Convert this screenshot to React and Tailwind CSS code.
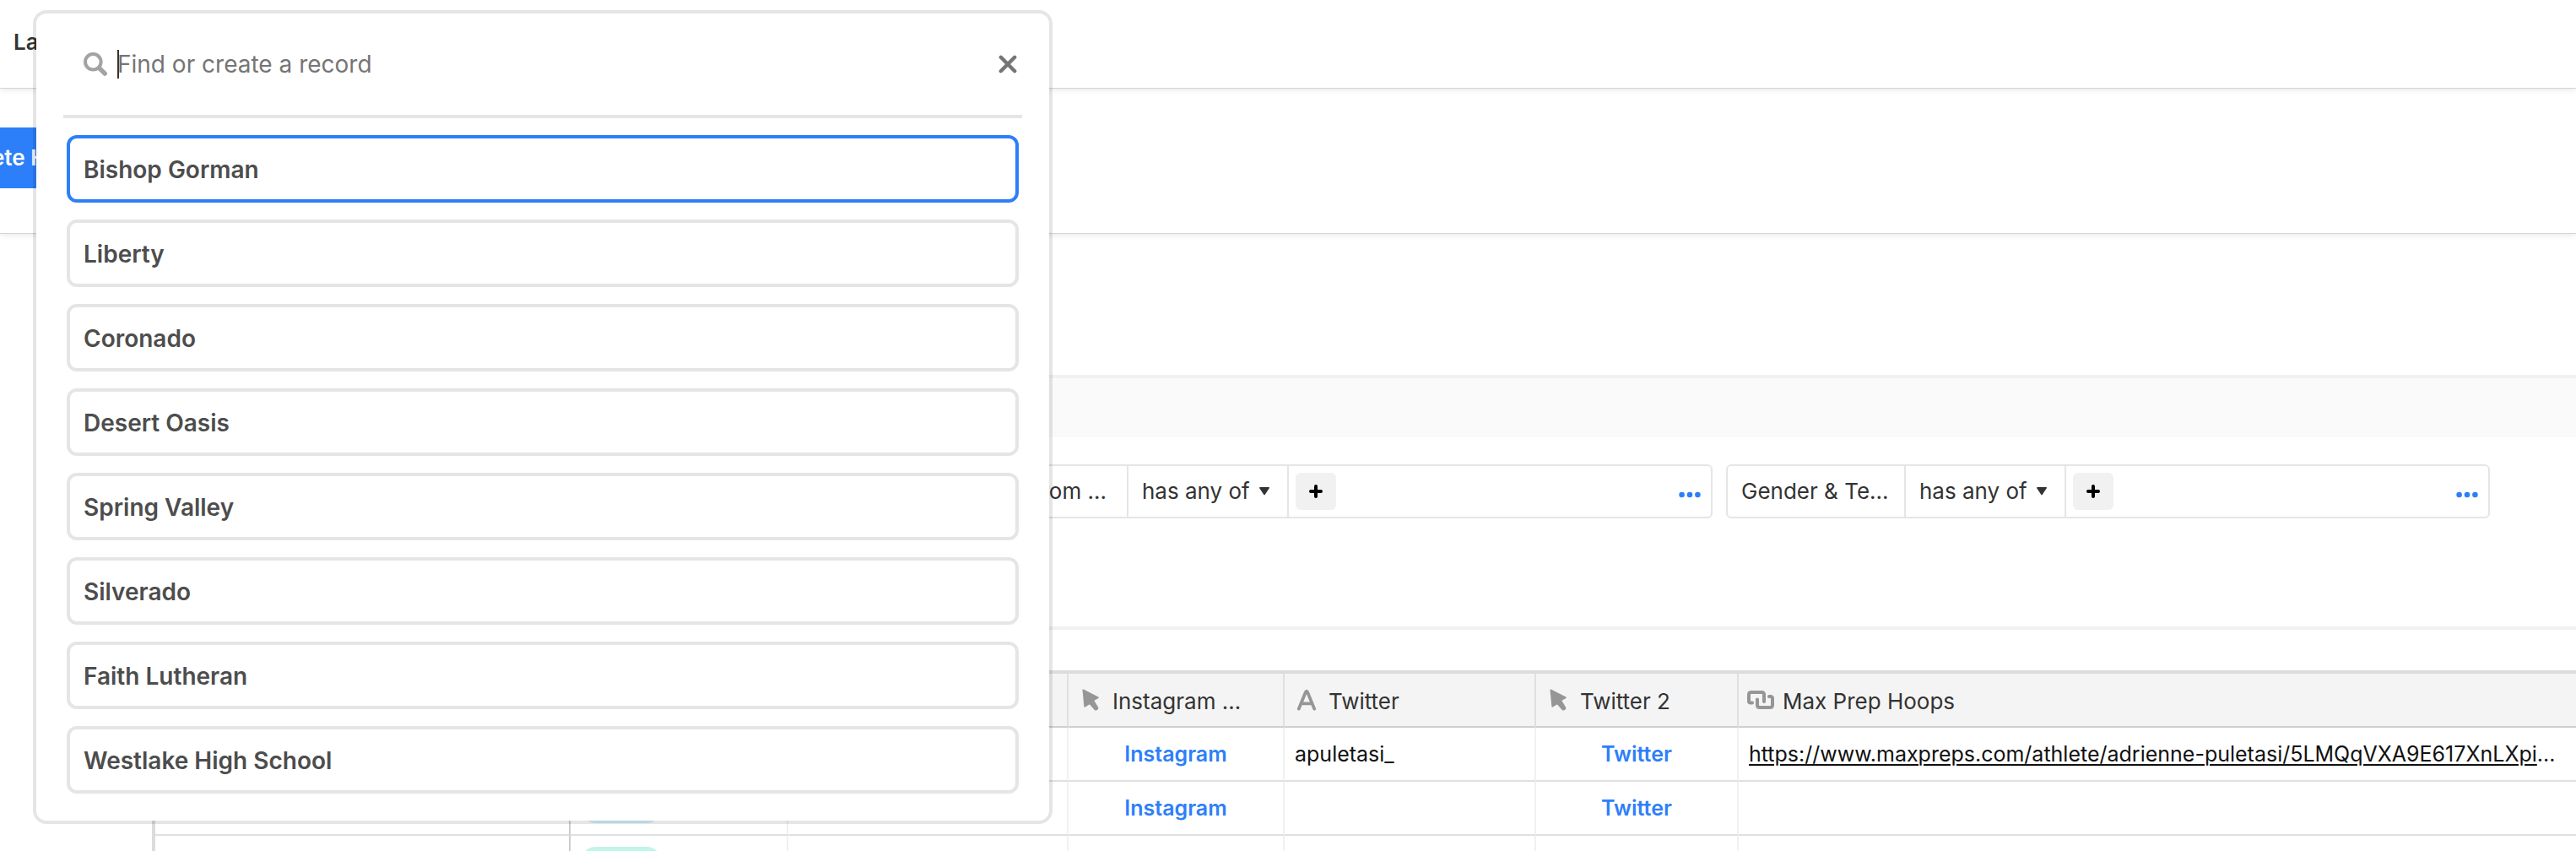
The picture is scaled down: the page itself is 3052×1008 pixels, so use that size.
import React, { useState } from 'react';

const schools = [
  'Bishop Gorman',
  'Liberty',
  'Coronado',
  'Desert Oasis',
  'Spring Valley',
  'Silverado',
  'Faith Lutheran',
  'Westlake High School',
];

const filters = [
  { field: 'from ...', align: 'justify-end' },
  { field: 'Gender & Te...', align: 'justify-start' },
];

const athletes = [
  {
    tag: 'bg-[#d0f0fd]',
    handle: 'apuletasi_',
    link: 'https://www.maxpreps.com/athlete/adrienne-puletasi/5LMQqVXA9E617XnLXpi',
  },
  { tag: 'bg-[#d0f0fd]' },
  { tag: 'bg-[#c2f5e9]' },
];

const SearchIcon = () => (
  <svg className="h-7 w-7 text-[#a3a3a3]" viewBox="0 0 28 28" fill="none" stroke="currentColor">
    <circle cx="11.3" cy="11.3" r="9.3" strokeWidth="4" />
    <path d="M18.5 18.5L25.2 25.2" strokeWidth="5.4" strokeLinecap="round" />
  </svg>
);

const CloseIcon = () => (
  <svg className="h-[22px] w-[22px]" viewBox="0 0 22 22" fill="none" stroke="currentColor" strokeWidth="4.4" strokeLinecap="round">
    <path d="M2.8 2.8L19.2 19.2M19.2 2.8L2.8 19.2" />
  </svg>
);

const PlusIcon = () => (
  <svg className="h-4 w-4" viewBox="0 0 16 16" fill="none" stroke="currentColor" strokeWidth="4" strokeLinecap="round">
    <path d="M8 2V14M2 8H14" />
  </svg>
);

const DotsIcon = () => (
  <svg className="h-2 w-[26px]" viewBox="0 0 26 8" fill="currentColor">
    <circle cx="3.6" cy="4" r="3.3" />
    <circle cx="13" cy="4" r="3.3" />
    <circle cx="22.4" cy="4" r="3.3" />
  </svg>
);

const CursorIcon = () => (
  <svg className="h-[26px] w-8" viewBox="0 0 32 26" fill="currentColor" stroke="currentColor" strokeWidth="1.6" strokeLinejoin="round">
    <path d="M7.3 1.3L25 10.3L19.3 13.6L24.6 22.4Q24.2 24.8 21.6 24.6L15 17.2L9.2 20.8Z" />
  </svg>
);

const TextIcon = () => (
  <svg className="h-[26px] w-8" viewBox="0 0 32 26" fill="none" stroke="currentColor" strokeWidth="3.8" strokeLinecap="round" strokeLinejoin="round">
    <path d="M6.8 23.6L14.8 4Q16 1.2 17.2 4L25.2 23.6M9.8 17.4H22.2" />
  </svg>
);

const LinkIcon = () => (
  <svg className="h-[26px] w-8" viewBox="0 0 32 26" fill="none" stroke="currentColor" strokeWidth="4" strokeLinecap="round" strokeLinejoin="round">
    <path d="M6 16.6H4.4Q2 16.6 2 14.2V6.8Q2 4 4.8 4H17.2Q20 4 20 6.8V15" />
    <path d="M26 9H27.6Q30 9 30 11.6V19.2Q30 22 27.2 22H14.8Q12 22 12 19.2V12.6" />
  </svg>
);

const columns = [
  { name: '', width: 'w-[492px]' },
  { name: '', width: 'w-[258px]' },
  { name: '', width: 'w-[332px]' },
  { name: 'Instagram ...', width: 'w-[256px]', icon: CursorIcon },
  { name: 'Twitter', width: 'w-[298px]', icon: TextIcon },
  { name: 'Twitter 2', width: 'w-[240px]', icon: CursorIcon },
  { name: 'Max Prep Hoops', width: 'w-auto', icon: LinkIcon },
];

const FilterBox = ({ field, align }) => (
  <div className="flex h-16 w-[905px] items-stretch rounded-md border-2 border-[#e5e5e5]">
    <button className={`flex w-[211px] items-center overflow-hidden border-r-2 border-[#e5e5e5] pl-4 pr-6 whitespace-nowrap ${align}`}>
      {field}
    </button>
    <div className="relative w-[190px] border-r-2 border-[#e5e5e5]">
      <select aria-label={`Condition for ${field}`} className="h-full w-full appearance-none bg-transparent pl-4 outline-none">
        <option>has any of</option>
      </select>
      <svg className="pointer-events-none absolute right-5 top-6 h-3 w-3.5" viewBox="0 0 14 12" fill="currentColor" stroke="currentColor" strokeWidth="1.5" strokeLinejoin="round">
        <path d="M1.8 1.8H12.2L7 9.6Z" />
      </svg>
    </div>
    <div className="flex flex-1 items-center justify-between pl-2 pr-3">
      <button aria-label="Add value" className="flex h-11 w-12 items-center justify-center rounded-md bg-[#f1f1f1] text-black">
        <PlusIcon />
      </button>
      <button aria-label="More options" className="pt-2 text-[#2d7ff9]">
        <DotsIcon />
      </button>
    </div>
  </div>
);

const AthleteTable = () => (
  <table className="w-full table-fixed border-separate border-spacing-0 border-l-4 border-t-4 border-[#dcdcdc]">
    <thead>
      <tr className="bg-[#f4f4f4]">
        {columns.map((col, index) => {
          const Icon = col.icon;
          return (
            <th
              key={index}
              className={`h-16 border-b-2 border-b-[#cfcfcf] p-0 text-left font-normal ${col.width} ${index < 6 ? 'border-r-2 border-r-[#dde1e3]' : ''}`}
            >
              {Icon && (
                <div className="flex items-center gap-2.5 pl-2.5 text-[#333333]">
                  <span className="text-[#969696]">
                    <Icon />
                  </span>
                  <span className="pt-1 whitespace-nowrap">{col.name}</span>
                </div>
              )}
            </th>
          );
        })}
      </tr>
    </thead>
    <tbody className="text-[25px]">
      {athletes.map((athlete, index) => (
        <tr key={index}>
          <td className="h-16 border-b-2 border-r-2 border-b-[#dde1e3] border-r-[#cccccc] p-0"></td>
          <td className="border-b-2 border-r-2 border-b-[#dde1e3] border-r-[#f1f1f1] p-0 pl-3">
            <div className={`h-9 w-24 rounded-full ${athlete.tag}`}></div>
          </td>
          <td className="border-b-2 border-r-2 border-b-[#dde1e3] border-r-[#f1f1f1] p-0"></td>
          <td className="border-b-2 border-r-2 border-b-[#dde1e3] border-r-[#f1f1f1] p-0 text-center">
            {index < 2 && <a href="#instagram" className="font-semibold text-[#2d7ff9]">Instagram</a>}
          </td>
          <td className="border-b-2 border-r-2 border-b-[#dde1e3] border-r-[#f1f1f1] p-0 pl-3 text-[#111111]">
            {athlete.handle}
          </td>
          <td className="border-b-2 border-r-2 border-b-[#dde1e3] border-r-[#f1f1f1] p-0 text-center">
            {index < 2 && <a href="#twitter" className="font-semibold text-[#2d7ff9]">Twitter</a>}
          </td>
          <td className="overflow-hidden border-b-2 border-b-[#dde1e3] p-0 pl-3 whitespace-nowrap text-[#111111]">
            {athlete.link && (
              <>
                <a href={athlete.link} className="underline decoration-2 underline-offset-3">{athlete.link}</a>...
              </>
            )}
          </td>
        </tr>
      ))}
    </tbody>
  </table>
);

const RecordPicker = () => {
  const [query, setQuery] = useState('');
  const [selected, setSelected] = useState('Bishop Gorman');

  return (
    <div className="absolute left-[43px] top-4 z-30 w-[1200px] rounded-xl bg-white px-8 pb-8 shadow-[0_0_0_4px_rgba(0,0,0,0.1)]">
      <div className="flex h-[124px] items-center border-b-4 border-[#e5e5e5] pl-6 pr-1.5">
        <SearchIcon />
        <div className="relative ml-3 flex-1">
          <span className="absolute left-0 top-0 h-[34px] w-0.5 bg-[#333333]"></span>
          <input
            type="text"
            aria-label="Find or create a record"
            value={query}
            onChange={(e) => setQuery(e.target.value)}
            placeholder="Find or create a record"
            className="block h-[34px] w-full bg-transparent text-[28px] text-[#333333] outline-none placeholder:text-[#757575]"
          />
        </div>
        <button aria-label="Close" className="text-[#757575]">
          <CloseIcon />
        </button>
      </div>
      <div className="flex flex-col gap-5 px-1 pt-5">
        {schools.map((school) => (
          <button
            key={school}
            onClick={() => setSelected(school)}
            className={`h-20 rounded-xl border-4 px-4 pt-0.5 text-left text-[28px] font-semibold text-[#4d4d4d] ${
              school === selected ? 'border-[#2d7ff9]' : 'border-[#e5e5e5]'
            }`}
          >
            {school}
          </button>
        ))}
      </div>
    </div>
  );
};

export default function App() {
  return (
    <div className="relative h-screen overflow-hidden bg-white font-['Inter','Liberation_Sans',sans-serif] text-[26px] leading-8 text-[#333333]">
      <header className="relative z-20 flex h-[105px] items-center border-b border-[#d4d4d4] bg-white pb-1 pl-4 font-semibold shadow-[0_1px_8px_rgba(0,0,0,0.1)]">
        La
      </header>
      <div className="relative z-10 flex h-[172px] items-center border-b border-[#d4d4d4] bg-white pb-2 shadow-[0_1px_8px_rgba(0,0,0,0.1)]">
        <button className="-ml-2.5 h-[72px] w-48 bg-[#2d7ff9] text-left font-semibold text-white">ete H</button>
      </div>

      <div className="ml-[180px] mt-[167px] h-[74px] border-t-4 border-[#f1f1f1] bg-[#fafafa]"></div>
      <div className="ml-[180px] flex h-[228px] gap-4 border-b-4 border-[#f1f1f1] pl-[944px] pt-8">
        {filters.map((filter) => (
          <FilterBox key={filter.field} field={filter.field} align={filter.align} />
        ))}
      </div>

      <div className="mt-12 pl-[180px]">
        <AthleteTable />
      </div>

      <RecordPicker />
    </div>
  );
}
